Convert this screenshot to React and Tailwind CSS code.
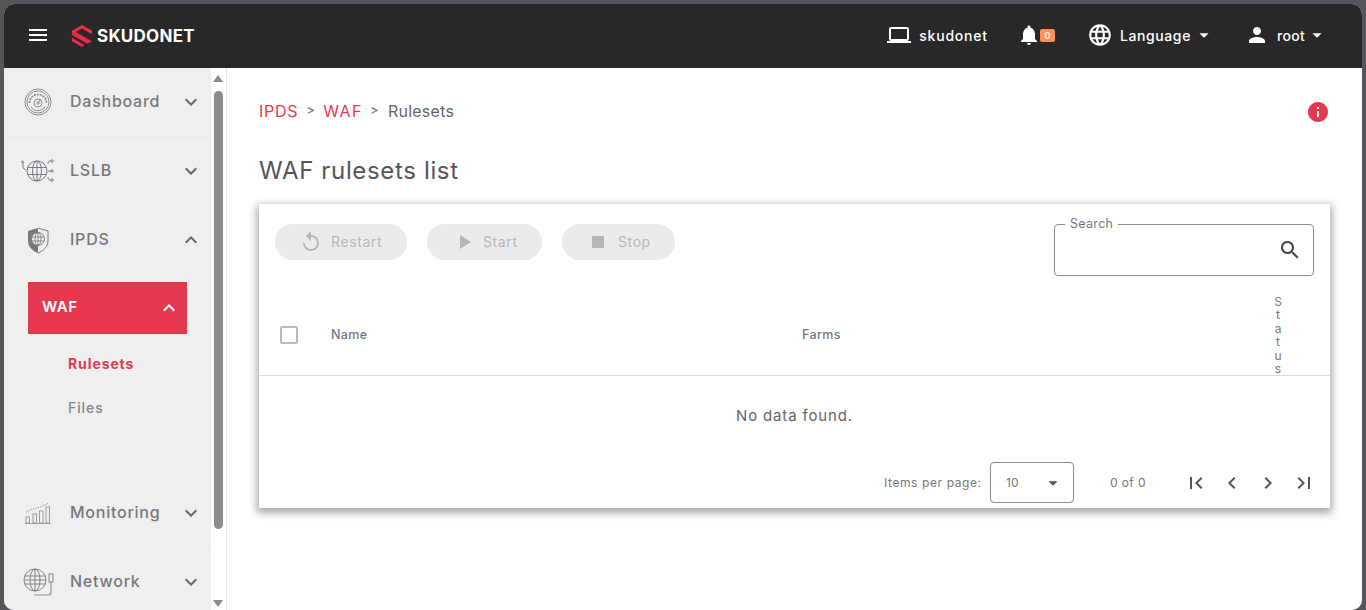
const ICONS = {
  menu: "M3 18h18v-2H3v2zm0-5h18v-2H3v2zm0-7v2h18V6H3z",
  laptop: "M20 18c1.1 0 1.99-.9 1.99-2L22 6c0-1.1-.9-2-2-2H4c-1.1 0-2 .9-2 2v10c0 1.1.9 2 2 2H0v2h24v-2h-4zM4 6h16v10H4V6z",
  bell: "M12 22c1.1 0 2-.9 2-2h-4c0 1.1.89 2 2 2zm6-6v-5c0-3.07-1.64-5.64-4.5-6.32V4c0-.83-.67-1.5-1.5-1.5s-1.5.67-1.5 1.5v.68C7.63 5.36 6 7.92 6 11v5l-2 2v1h16v-1l-2-2z",
  globe: "M11.99 2C6.47 2 2 6.48 2 12s4.47 10 9.99 10C17.52 22 22 17.52 22 12S17.52 2 11.99 2zm6.93 6h-2.95c-.32-1.25-.78-2.45-1.38-3.56 1.84.63 3.37 1.91 4.33 3.56zM12 4.04c.83 1.2 1.48 2.53 1.91 3.96h-3.82c.43-1.43 1.08-2.76 1.91-3.96zM4.26 14C4.1 13.36 4 12.69 4 12s.1-1.36.26-2h3.38c-.08.66-.14 1.32-.14 2 0 .68.06 1.34.14 2H4.26zm.82 2h2.95c.32 1.25.78 2.45 1.38 3.56-1.84-.63-3.37-1.9-4.33-3.56zm2.95-8H5.08c.96-1.66 2.49-2.93 4.33-3.56C8.81 5.55 8.35 6.75 8.03 8zM12 19.96c-.83-1.2-1.48-2.53-1.91-3.96h3.82c-.43 1.43-1.08 2.76-1.91 3.96zM14.34 14H9.66c-.09-.66-.16-1.32-.16-2 0-.68.07-1.35.16-2h4.68c.09.65.16 1.32.16 2 0 .68-.07 1.34-.16 2zm.25 5.56c.6-1.11 1.06-2.31 1.38-3.56h2.95c-.96 1.65-2.49 2.93-4.33 3.56zM16.36 14c.08-.66.14-1.32.14-2 0-.68-.06-1.34-.14-2h3.38c.16.64.26 1.31.26 2s-.1 1.36-.26 2h-3.38z",
  person: "M12 12c2.21 0 4-1.79 4-4s-1.79-4-4-4-4 1.79-4 4 1.79 4 4 4zm0 2c-2.67 0-8 1.34-8 4v2h16v-2c0-2.66-5.33-4-8-4z",
  search: "M15.5 14h-.79l-.28-.27C15.41 12.59 16 11.11 16 9.5 16 5.91 13.09 3 9.5 3S3 5.91 3 9.5 5.91 16 9.5 16c1.61 0 3.09-.59 4.23-1.57l.27.28v.79l5 4.99L20.49 19l-4.99-5zm-6 0C7.01 14 5 11.99 5 9.5S7.01 5 9.5 5 14 7.01 14 9.5 11.99 14 9.5 14z",
  down: "M16.59 8.59L12 13.17 7.41 8.59 6 10l6 6 6-6z",
  up: "M12 8l-6 6 1.41 1.41L12 10.83l4.59 4.58L18 14z",
  caret: "M7 10l5 5 5-5z",
  play: "M8 5v14l11-7z",
  stop: "M6 6h12v12H6z",
  replay: "M12 5V1L7 6l5 5V7c3.31 0 6 2.69 6 6s-2.69 6-6 6-6-2.69-6-6H4c0 4.42 3.58 8 8 8s8-3.58 8-8-3.58-8-8-8z",
  first: "M18.41 16.59L13.82 12l4.59-4.59L17 6l-6 6 6 6zM6 6h2v12H6z",
  prev: "M15.41 7.41L14 6l-6 6 6 6 1.41-1.41L10.83 12z",
  next: "M10 6L8.59 7.41 13.17 12l-4.58 4.59L10 18l6-6z",
  last: "M5.59 7.41L10.18 12l-4.59 4.59L7 18l6-6-6-6zM16 6h2v12h-2z",
  info: "M12 2C6.48 2 2 6.48 2 12s4.48 10 10 10 10-4.48 10-10S17.52 2 12 2zm1 15h-2v-6h2v6zm0-8h-2V7h2v2z",
};

function Icon({ name, className }) {
  return (
    <svg viewBox="0 0 24 24" fill="currentColor" className={className}>
      <path d={ICONS[name]} />
    </svg>
  );
}

function DashboardIcon() {
  return (
    <svg viewBox="0 0 28 28" fill="none" stroke="#85858b" strokeWidth="0.9" className="w-[28px] h-[28px]">
      <circle cx="14" cy="14" r="13" />
      <circle cx="14" cy="14" r="11" />
      <path d="M5.5 15a8.5 8.5 0 0 1 17 0" strokeDasharray="2 1" strokeWidth="1.6" />
      <path d="M7 19a8.5 8.5 0 0 0 14 0" />
      <circle cx="14" cy="15" r="4" />
      <circle cx="14" cy="15" r="1.2" />
      <path d="M14.5 14.5l2.5-3.5" />
    </svg>
  );
}

function LslbIcon() {
  return (
    <svg viewBox="0 0 36 26" fill="none" stroke="#7d7d84" strokeWidth="1" className="w-[36px] h-[26px]">
      <circle cx="17" cy="13" r="10" />
      <ellipse cx="17" cy="13" rx="4.5" ry="10" />
      <path d="M7.5 9.5h19M7.5 16.5h19M17 3v20" />
      <path d="M3 5v5l3 2M28 6c0-3 1-3 3-3M28 13h3M28 19c0 3 1 3 3 3" />
      <circle cx="2.5" cy="4" r="1" />
      <circle cx="32" cy="3" r="1.2" />
      <circle cx="32" cy="13" r="1.2" />
      <circle cx="32" cy="22" r="1.2" />
    </svg>
  );
}

function IpdsIcon() {
  return (
    <svg viewBox="0 0 24 27" className="w-[24px] h-[27px]" fill="none">
      <path d="M12 1L2 4v10c0 6 5 10 10 12z" fill="#77777d" />
      <path d="M12 1l10 3v10c0 6-5 10-10 12" stroke="#77777d" strokeWidth="1" />
      <circle cx="12" cy="12" r="6.5" fill="#efefef" stroke="#77777d" strokeWidth="0.9" />
      <ellipse cx="12" cy="12" rx="3" ry="6.5" stroke="#77777d" strokeWidth="0.8" />
      <path d="M6 10h12M6 14h12M12 5.5v13" stroke="#77777d" strokeWidth="0.8" />
    </svg>
  );
}

function MonitoringIcon() {
  return (
    <svg viewBox="0 0 28 22" fill="none" stroke="#94949a" strokeWidth="0.9" className="w-[28px] h-[22px]">
      <path d="M1 21.5h26" />
      <rect x="2" y="15" width="3.5" height="6" />
      <rect x="9" y="12" width="3.5" height="9" />
      <rect x="15.5" y="9" width="3.5" height="12" />
      <rect x="22" y="5" width="3.5" height="16" />
      <path d="M2 10l7-3 7-2 9-4" strokeDasharray="1.5 1" />
    </svg>
  );
}

function NetworkIcon() {
  return (
    <svg viewBox="0 0 32 28" fill="none" stroke="#7d7d84" strokeWidth="0.9" className="w-[32px] h-[28px] ml-[2px]">
      <circle cx="12" cy="12" r="11" />
      <ellipse cx="12" cy="12" rx="5" ry="11" />
      <path d="M1.5 8h21M1 12h22M1.5 16h21M12 1v22" />
      <rect x="26" y="6" width="4" height="8" />
      <path d="M28 14v10c0 2-1 3-2 3H11" stroke="#8a8f9a" strokeWidth="1.1" />
    </svg>
  );
}

function MenuItem({ label, icon, open, className = "h-[69px] border-b border-[#eaeaea] last:border-b-0" }) {
  return (
    <div className={`flex items-center pl-[16px] pr-[8px] ${className}`}>
      <div className="w-[36px] flex justify-center shrink-0">{icon}</div>
      <span className="ml-[14px] pb-[2px] flex-1 text-[16px] text-[#77777d] font-medium tracking-[0.75px]">{label}</span>
      <Icon name={open ? "up" : "down"} className="w-[24px] h-[24px] text-[#66666a]" />
    </div>
  );
}

function ActionButton({ icon, label, className, iconClass }) {
  return (
    <button className={`flex items-center h-[36px] rounded-full bg-[#ebebeb] text-[#b7b7b7] text-[14px] ${className}`}>
      <Icon name={icon} className={iconClass} />
      <span className="pb-[2px] tracking-[0.6px]">{label}</span>
    </button>
  );
}

export default function App() {
  return (
    <div className="w-[1366px] h-[610px] bg-[#55565c] pt-[4px] px-[4px] overflow-hidden font-['Inter',sans-serif]">
      <div className="h-[606px] bg-white rounded-[10px] overflow-hidden flex flex-col">
        <header className="h-[64px] shrink-0 bg-[#282828] text-white flex items-center pl-[22px] pr-[34px] pb-[2px]">
          <Icon name="menu" className="w-[24px] h-[24px]" />
          <svg viewBox="0 0 20 22" className="w-[20px] h-[22px] ml-[22px] mt-[2px]" fill="#ee2b47">
            <path d="M10 0L20 5.7V9.2L10 3.6 3.8 7.1 19.8 16.3 15.5 18.8 0 10V5.7z" />
            <path d="M0 12.8L12.5 20 10 22 0 16.3z" />
          </svg>
          <span className="ml-[5px] mt-[3px] text-[17px] font-bold tracking-[0.25px]">SKUDONET</span>
          <div className="flex-1" />
          <Icon name="laptop" className="w-[24px] h-[24px]" />
          <span className="ml-[8px] text-[14px] font-medium tracking-[0.8px]">skudonet</span>
          <Icon name="bell" className="w-[24px] h-[24px] ml-[29px]" />
          <span className="ml-[-1px] w-[15px] h-[13px] rounded-[2px] bg-[#ff9157] text-[9px] leading-[13px] text-center font-medium">0</span>
          <Icon name="globe" className="w-[26px] h-[26px] ml-[32px]" />
          <span className="ml-[7px] text-[14px] font-medium tracking-[0.6px]">Language</span>
          <Icon name="caret" className="w-[22px] h-[22px] ml-[2px]" />
          <Icon name="person" className="w-[24px] h-[24px] ml-[30px]" />
          <span className="ml-[8px] text-[14px] font-medium tracking-[0.3px]">root</span>
          <Icon name="caret" className="w-[22px] h-[22px] ml-[1px]" />
        </header>

        <div className="flex-1 flex min-h-0">
          <aside className="w-[207px] shrink-0 bg-[#efefef] overflow-hidden">
            <MenuItem label="Dashboard" icon={<DashboardIcon />} />
            <MenuItem label="LSLB" icon={<LslbIcon />} />
            <MenuItem label="IPDS" icon={<IpdsIcon />} open className="h-[68px]" />
            <div className="h-[204px] border-b border-[#eaeaea] pt-[8px]">
              <div className="ml-[24px] w-[159px] h-[52px] bg-[#e63950] text-white flex items-center pl-[14px] pr-[6px]">
                <span className="flex-1 pb-[2px] text-[15px] font-semibold tracking-[0.5px]">WAF</span>
                <Icon name="up" className="w-[24px] h-[24px]" />
              </div>
              <div className="h-[8px]" />
              <div className="h-[44px] flex items-center pb-[2px] pl-[64px] text-[14px] font-bold text-[#e63950] tracking-[0.9px]">Rulesets</div>
              <div className="h-[44px] flex items-center pb-[2px] pl-[64px] text-[14px] font-medium text-[#85858a] tracking-[0.9px]">Files</div>
            </div>
            <MenuItem label="Monitoring" icon={<MonitoringIcon />} className="h-[69px] border-b border-[#eaeaea] pt-[2px]" />
            <MenuItem label="Network" icon={<NetworkIcon />} />
          </aside>

          <div className="w-[16px] shrink-0 bg-white border-r border-[#e4e4e4] flex flex-col items-center pr-[1px] pt-[7px] pb-[3px]">
            <div className="w-0 h-0 border-x-[5px] border-x-transparent border-b-[7px] border-b-[#8c8c8c]" />
            <div className="w-[9px] h-[438px] mt-[9px] rounded-full bg-[#8c8c8c]" />
            <div className="flex-1" />
            <div className="w-0 h-0 border-x-[5px] border-x-transparent border-t-[7px] border-t-[#8c8c8c]" />
          </div>

          <main className="flex-1 min-w-0 pl-[32px] pr-[32px]">
            <div className="h-[88px] flex items-center text-[16px] text-[#66666a] tracking-[0.25px]">
              <span className="pb-[2px] text-[#e63950] tracking-[0.75px]">IPDS</span>
              <span className="mx-[8px] pb-[2px] text-[13px]">&gt;</span>
              <span className="pb-[2px] text-[#e63950] tracking-[1.5px]">WAF</span>
              <span className="ml-[7px] mr-[9px] pb-[2px] text-[13px]">&gt;</span>
              <span className="pb-[2px]">Rulesets</span>
              <div className="flex-1" />
              <Icon name="info" className="w-[24px] h-[24px] text-[#e63950]" />
            </div>
            <h1 className="h-[30px] flex items-center text-[24px] font-normal text-[#55555a] tracking-[0.65px]">WAF rulesets list</h1>

            <section className="mt-[18px] h-[304px] w-[1071px] bg-white shadow-[0_3px_8px_2px_rgba(0,0,0,0.35)]">
              <div className="h-[88px] flex items-start px-[16px] pt-[20px]">
                <ActionButton icon="replay" label="Restart" className="w-[132px] pl-[24px]" iconClass="w-[24px] h-[24px] mr-[8px]" />
                <ActionButton icon="play" label="Start" className="w-[115px] ml-[20px] pl-[25px]" iconClass="w-[24px] h-[24px] mr-[7px]" />
                <ActionButton icon="stop" label="Stop" className="w-[113px] ml-[20px] pl-[24px]" iconClass="w-[24px] h-[24px] mr-[8px]" />
                <div className="flex-1" />
                <div className="relative w-[260px] h-[52px] border border-[#8c8c8c] rounded-[4px] flex items-center justify-end pr-[11px]">
                  <span className="absolute left-[10px] top-[-9px] bg-white px-[5px] text-[12.5px] leading-[16px] text-[#77777d] tracking-[0.3px]">Search</span>
                  <Icon name="search" className="w-[24px] h-[24px] text-[#444444]" />
                </div>
              </div>

              <div className="h-[84px] border-b border-[#dddddd] flex items-center text-[12.5px] text-[#77777d] pt-[3px]">
                <div className="ml-[21px] w-[18px] h-[18px] border-2 border-[#bbbbbb] rounded-[2px]" />
                <span className="ml-[33px] w-[471px] font-medium tracking-[0.35px]">Name</span>
                <span className="flex-1 font-medium tracking-[0.35px]">Farms</span>
                <span className="w-[8px] mr-[48px] break-all text-center leading-[13.5px] text-[12px]">Status</span>
              </div>

              <div className="h-[80px] flex items-center justify-center text-[15px] text-[#66666a] tracking-[0.85px]">No data found.</div>

              <div className="h-[41px] flex items-center text-[12px] text-[#77777d] pl-[625px] mt-[6px]">
                <span className="w-[106px] tracking-[0.6px]">Items per page:</span>
                <div className="w-[84px] h-[41px] border border-[#8c8c8c] rounded-[4px] flex items-center pl-[15px] pr-[9px]">
                  <span className="flex-1">10</span>
                  <Icon name="caret" className="w-[22px] h-[22px] text-[#555555]" />
                </div>
                <span className="ml-[36px] w-[36px] whitespace-nowrap tracking-[0.4px]">0 of 0</span>
                <div className="ml-[38px] flex gap-[12px] text-[#555555]">
                  <Icon name="first" className="w-[24px] h-[24px]" />
                  <Icon name="prev" className="w-[24px] h-[24px]" />
                  <Icon name="next" className="w-[24px] h-[24px]" />
                  <Icon name="last" className="w-[24px] h-[24px]" />
                </div>
              </div>
            </section>
          </main>
        </div>
      </div>
    </div>
  );
}
